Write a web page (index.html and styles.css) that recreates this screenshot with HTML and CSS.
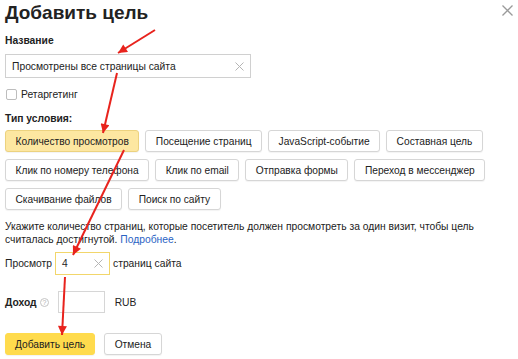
FILE: index.html
```html
<html lang="ru">
<head>
  <meta charset="UTF-8">
  <meta name="viewport" content="width=device-width, initial-scale=1.0">
  <title>Добавить цель</title>
  <link rel="stylesheet" href="styles.css">
</head>
<body>
  <div class="dialog">
    <div class="head">
      <h1 class="title">Добавить цель</h1>
      <svg class="close" width="11" height="11" viewBox="0 0 11 11"><path d="M0.5 0.5L10.5 10.5M10.5 0.5L0.5 10.5" stroke="#9a9a9a" stroke-width="1.3"/></svg>
    </div>

    <div class="label">Название</div>
    <div class="field name">
      <span class="value">Просмотрены все страницы сайта</span>
      <svg class="clear" width="9" height="9" viewBox="0 0 9 9"><path d="M0.5 0.5L8.5 8.5M8.5 0.5L0.5 8.5" stroke="#b5b5b5" stroke-width="1"/></svg>
    </div>

    <label class="check"><span class="box"></span>Ретаргетинг</label>

    <div class="label type-label">Тип условия:</div>
    <div class="types">
      <button class="btn selected">Количество просмотров</button>
      <button class="btn">Посещение страниц</button>
      <button class="btn">JavaScript-событие</button>
      <button class="btn">Составная цель</button>
      <button class="btn">Клик по номеру телефона</button>
      <button class="btn">Клик по email</button>
      <button class="btn">Отправка формы</button>
      <button class="btn">Переход в мессенджер</button>
      <button class="btn">Скачивание файлов</button>
      <button class="btn">Поиск по сайту</button>
    </div>

    <p class="hint">Укажите количество страниц, которые посетитель должен просмотреть за один визит, чтобы цель считалась достигнутой. <a href="#">Подробнее</a>.</p>

    <div class="row views">
      <span>Просмотр</span>
      <div class="field count active">
        <span class="value">4</span>
        <svg class="clear" width="9" height="9" viewBox="0 0 9 9"><path d="M0.5 0.5L8.5 8.5M8.5 0.5L0.5 8.5" stroke="#b5b5b5" stroke-width="1"/></svg>
      </div>
      <span>страниц сайта</span>
    </div>

    <div class="row income">
      <b>Доход</b>
      <svg class="help" width="9" height="9" viewBox="0 0 9 9"><circle cx="4.5" cy="4.5" r="4" fill="none" stroke="#c4c4c4"/><text x="4.5" y="7" text-anchor="middle" font-size="7" fill="#b0b0b0" font-family="Liberation Sans, Arial, sans-serif">?</text></svg>
      <div class="field money"></div>
      <span class="currency">RUB</span>
    </div>

    <div class="actions">
      <button class="btn primary">Добавить цель</button>
      <button class="btn">Отмена</button>
    </div>
  </div>

  <svg class="arrows" width="518" height="359" viewBox="0 0 518 359">
    <defs>
      <marker id="head" markerUnits="userSpaceOnUse" viewBox="0 0 10 10" refX="10" refY="5" markerWidth="11" markerHeight="9" orient="auto">
        <path d="M0 0L10 5L0 10z" fill="#e8231d"/>
      </marker>
    </defs>
    <g stroke="#e8231d" stroke-width="2" marker-end="url(#head)">
      <line x1="155" y1="30" x2="118" y2="53"/>
      <line x1="117" y1="73" x2="103" y2="133"/>
      <line x1="124" y1="150" x2="73" y2="255"/>
      <line x1="65" y1="277" x2="62" y2="335"/>
    </g>
  </svg>
</body>
</html>
```

FILE: styles.css
```css
* {
  box-sizing: border-box;
}
body {
  margin: 0;
  position: relative;
  font-family: "Liberation Sans", Arial, sans-serif;
  font-size: 10.3px;
  line-height: 13px;
  color: #222;
  background: #fff;
}
.dialog {
  padding: 1px 5px 0;
}
.head {
  display: flex;
  justify-content: space-between;
  align-items: flex-start;
}
.title {
  margin: 0;
  font-size: 19px;
  line-height: 24px;
  font-weight: bold;
}
.close {
  margin-top: 4px;
}
.label {
  margin-top: 9px;
  font-weight: bold;
}
.field {
  display: flex;
  align-items: center;
  border: 1px solid #d0d0d0;
  background: #fff;
  padding: 0 6px;
}
.field .value {
  flex: 1;
}
.name {
  width: 246px;
  height: 24px;
  margin-top: 7px;
}
.check {
  display: flex;
  align-items: center;
  gap: 4px;
  margin-top: 10px;
  padding-left: 1px;
  height: 13px;
}
.box {
  width: 11px;
  height: 11px;
  border: 1px solid #bdbdbd;
  border-radius: 2px;
}
.type-label {
  margin-top: 11px;
}
.types {
  display: flex;
  flex-wrap: wrap;
  gap: 7px 6px;
  margin-top: 5px;
  width: 490px;
}
.btn {
  height: 22px;
  padding: 0 9.5px;
  font-family: inherit;
  font-size: 10.2px;
  color: #222;
  background: #fff;
  border: 1px solid #d6d6d6;
  border-radius: 3px;
  box-shadow: 0 1px 1px rgba(0, 0, 0, 0.05);
}
.btn.selected {
  background: #fde7a1;
  border-color: #ecd27f;
}
.btn.primary {
  background: #ffdb4d;
  border-color: #ffdb4d;
  padding: 0 9px;
}
.hint {
  margin: 10px 0 0;
  width: 490px;
}
.hint a {
  color: #2a63c4;
  text-decoration: none;
}
.row {
  display: flex;
  align-items: center;
}
.views {
  margin-top: 6px;
}
.count {
  width: 55px;
  height: 23px;
  margin: 0 3px 0 3px;
  border-color: #f2d66b;
}
.income {
  margin-top: 16px;
}
.help {
  margin-left: 3px;
}
.money {
  width: 47px;
  height: 22px;
  margin-left: 9px;
  border-color: #d6d6d6;
}
.currency {
  margin-left: 10px;
}
.actions {
  display: flex;
  gap: 9px;
  margin-top: 20px;
}
.arrows {
  position: absolute;
  left: 0;
  top: 0;
  pointer-events: none;
}
```
